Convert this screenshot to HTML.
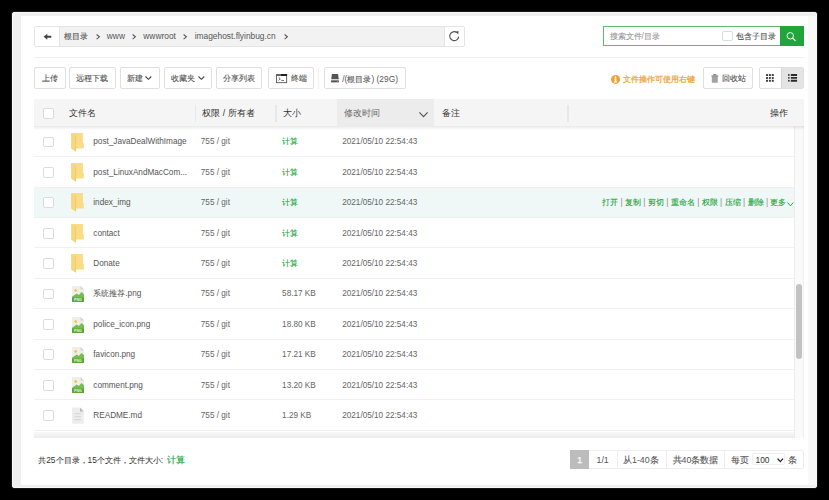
<!DOCTYPE html>
<html><head><meta charset="utf-8">
<style>
*{box-sizing:border-box;margin:0;padding:0}
html,body{width:829px;height:500px;overflow:hidden;background:#000}
body{position:relative;font-family:"Liberation Sans",sans-serif;font-size:8.2px;color:#555}
.abs{position:absolute}
#panel{left:12px;top:12px;width:805px;height:476px;background:#efefef;border-radius:3px;box-shadow:0 0 0 1px #161616, inset 0 0 0 1px #f9f9f9}
#white{left:21px;top:16px;width:796px;height:469px;background:#fff}
#rshade{left:808px;top:16px;width:9px;height:469px;background:#f9f9f9}
.box{position:absolute;border:1px solid #e2e2e2;border-radius:2px;background:#fff}
.t{position:absolute;white-space:nowrap}
.btn{position:absolute;top:67px;height:22px;border:1px solid #e0e0e0;border-radius:2px;background:#fff}
.row{position:absolute;left:34px;width:759.6px;height:30.42px;border-bottom:1px solid #f1f1f1}
.cb{position:absolute;width:10.8px;height:10.8px;border:1px solid #dcdcdc;border-radius:2px;background:#fff}
.g{color:#20a53a}
svg{position:absolute;overflow:visible}
</style></head><body>
<div id="panel" class="abs"></div>
<div id="white" class="abs"></div>
<div id="rshade" class="abs"></div>
<div class="box" style="left:34px;top:26px;width:431px;height:21px;background:#f2f2f2;border-color:#e4e4e4"></div>
<div class="abs" style="left:35px;top:27px;width:25px;height:19px;background:#fff;border-right:1px solid #e4e4e4"></div>
<div class="abs" style="left:444px;top:27px;width:20px;height:19px;background:#fff;border-left:1px solid #e4e4e4"></div>
<svg style="left:0;top:0" width="829" height="500"><path d="M43.6 36.7 L47.3 33.7 L47.3 35.8 L51.3 35.8 L51.3 37.7 L47.3 37.7 L47.3 39.7 Z" fill="#444"/><path d="M456.8 32.5 A4.5 4.5 0 1 0 458.7 36.6" fill="none" stroke="#555" stroke-width="1.15"/><path d="M455.4 31.7 L458.6 31.1 L458.2 34.6 Z" fill="#555"/></svg>
<div class="t" style="left:64.20px;top:31.60px;line-height:10px;font-size:8.0px;color:#555;"><span style="-webkit-text-stroke:0.12px currentColor">根目录</span></div>
<svg style="left:95.5px;top:33.6px" width="5" height="6"><path d="M0.6 0.5 L3.4 2.8 L0.6 5.1" fill="none" stroke="#555" stroke-width="1.05"/></svg>
<svg style="left:132.0px;top:33.6px" width="5" height="6"><path d="M0.6 0.5 L3.4 2.8 L0.6 5.1" fill="none" stroke="#555" stroke-width="1.05"/></svg>
<svg style="left:183.2px;top:33.6px" width="5" height="6"><path d="M0.6 0.5 L3.4 2.8 L0.6 5.1" fill="none" stroke="#555" stroke-width="1.05"/></svg>
<svg style="left:283.5px;top:33.6px" width="5" height="6"><path d="M0.6 0.5 L3.4 2.8 L0.6 5.1" fill="none" stroke="#555" stroke-width="1.05"/></svg>
<div class="t" style="left:106.80px;top:30.80px;line-height:10px;font-size:8.4px;color:#555;">www</div>
<div class="t" style="left:143.30px;top:30.80px;line-height:10px;font-size:8.4px;color:#555;">wwwroot</div>
<div class="t" style="left:194.70px;top:30.80px;line-height:10px;font-size:8.4px;color:#555;">imagehost.flyinbug.cn</div>
<div class="abs" style="left:34px;top:56.6px;width:770px;height:1px;background:#f0f0f0"></div>
<div class="abs" style="left:603.1px;top:26.2px;width:177px;height:20.3px;border:1px solid #5fbb6f;border-right:none;background:#fff"></div>
<div class="abs" style="left:779.7px;top:26.2px;width:24.1px;height:20.3px;background:#20a53a"></div>
<div class="t" style="left:609.50px;top:31.40px;line-height:10px;font-size:8.4px;color:#999;"><span style="-webkit-text-stroke:0.12px currentColor">搜索文件</span>/<span style="-webkit-text-stroke:0.12px currentColor">目录</span></div>
<div class="cb" style="left:722px;top:31px;width:10.6px;height:10.1px"></div>
<div class="t" style="left:735.90px;top:32.20px;line-height:10px;font-size:8.1px;color:#555;"><span style="-webkit-text-stroke:0.12px currentColor">包含子目录</span></div>
<svg style="left:0;top:0" width="829" height="500"><circle cx="790.3" cy="35.8" r="3.2" fill="none" stroke="#fff" stroke-width="0.95"/><path d="M792.6 38.1 L795.5 40.7" stroke="#fff" stroke-width="1.15"/></svg>
<div class="btn" style="left:34px;width:31.6px"></div>
<div class="btn" style="left:68.8px;width:47.1px"></div>
<div class="btn" style="left:119.6px;width:40.0px"></div>
<div class="btn" style="left:163.5px;width:48.2px"></div>
<div class="btn" style="left:215.5px;width:46.9px"></div>
<div class="btn" style="left:268.2px;width:45.7px"></div>
<div class="btn" style="left:324px;width:81.8px"></div>
<div class="btn" style="left:702.9px;width:50.2px"></div>
<div class="abs" style="left:318.3px;top:67.8px;width:1px;height:21px;background:#efefef"></div>
<div class="btn" style="left:759px;width:44.8px;overflow:hidden"><div class="abs" style="left:21.2px;top:0;width:23px;height:20px;background:#e4e4e4;border-left:1px solid #d6d6d6"></div></div>
<div class="t" style="left:42.10px;top:74.00px;line-height:10px;font-size:8.0px;color:#555;"><span style="-webkit-text-stroke:0.12px currentColor">上传</span></div>
<div class="t" style="left:76.40px;top:74.00px;line-height:10px;font-size:8.0px;color:#555;"><span style="-webkit-text-stroke:0.12px currentColor">远程下载</span></div>
<div class="t" style="left:127.10px;top:74.00px;line-height:10px;font-size:8.0px;color:#555;"><span style="-webkit-text-stroke:0.12px currentColor">新建</span></div>
<div class="t" style="left:171.10px;top:74.00px;line-height:10px;font-size:8.0px;color:#555;"><span style="-webkit-text-stroke:0.12px currentColor">收藏夹</span></div>
<div class="t" style="left:223.30px;top:74.00px;line-height:10px;font-size:8.0px;color:#555;"><span style="-webkit-text-stroke:0.12px currentColor">分享列表</span></div>
<div class="t" style="left:290.80px;top:74.00px;line-height:10px;font-size:8.0px;color:#555;"><span style="-webkit-text-stroke:0.12px currentColor">终端</span></div>
<div class="t" style="left:342.30px;top:73.50px;line-height:10px;font-size:8.4px;color:#555;">/(<span style="-webkit-text-stroke:0.12px currentColor">根目录</span>) (29G)</div>
<div class="t" style="left:721.90px;top:74.00px;line-height:10px;font-size:8.0px;color:#555;"><span style="-webkit-text-stroke:0.12px currentColor">回收站</span></div>
<div class="t" style="left:622.90px;top:74.60px;line-height:10px;font-size:8.0px;color:#eea540;"><span style="-webkit-text-stroke:0.25px currentColor">文件操作可使用右键</span></div>
<svg style="left:145.4px;top:76.1px" width="7" height="4"><path d="M0.5 0.5 L3.4 3.3 L6.3 0.5" fill="none" stroke="#444" stroke-width="1.1"/></svg>
<svg style="left:197.6px;top:76.1px" width="7" height="4"><path d="M0.5 0.5 L3.4 3.3 L6.3 0.5" fill="none" stroke="#444" stroke-width="1.1"/></svg>
<svg style="left:276px;top:74px" width="11" height="9"><rect x="0.45" y="0.45" width="10.2" height="8.2" fill="none" stroke="#555" stroke-width="0.9"/><rect x="0" y="0" width="5" height="2" fill="#666"/><rect x="5" y="0" width="6.1" height="2" fill="#222"/><path d="M2.7 3.3 L4.3 4.9 L2.7 6.5" fill="none" stroke="#444" stroke-width="0.9"/><rect x="5.4" y="6.0" width="2.6" height="0.8" fill="#555"/></svg>
<svg style="left:331px;top:73.5px" width="9" height="9"><path d="M1.3 0.1 H6.7 Q7.0 0.1 7.1 0.6 L7.8 5.3 H0.2 L0.9 0.6 Q1.0 0.1 1.3 0.1 Z" fill="#555"/><rect x="0.1" y="6.3" width="7.8" height="2.1" fill="#555"/><rect x="6.2" y="6.9" width="1" height="0.9" fill="#999"/></svg>
<svg style="left:611px;top:75.3px" width="10" height="10"><circle cx="4.55" cy="4.4" r="4.5" fill="#eea236"/><circle cx="4.5" cy="2.2" r="0.85" fill="#fff"/><path d="M3.3 3.5 H5.4 V6.4 H6.1 V7.4 H3.0 V6.4 H3.7 V4.4 H3.3 Z" fill="#fff"/></svg>
<svg style="left:710.6px;top:73.6px" width="8" height="10"><rect x="2.1" y="0.1" width="3.4" height="1.7" rx="0.85" fill="#8a8a8a"/><rect x="0.3" y="1.3" width="7.1" height="1.7" rx="0.8" fill="#999"/><path d="M0.8 3.0 H6.8 V8.0 Q6.8 8.8 6.0 8.8 H1.6 Q0.8 8.8 0.8 8.0 Z" fill="#a2a2a2"/></svg>
<svg style="left:766px;top:74.3px" width="8" height="8"><rect x="0.0" y="0.0" width="2" height="2" rx="0.6" fill="#3a3a3a"/><rect x="0.0" y="2.9" width="2" height="2" rx="0.6" fill="#3a3a3a"/><rect x="0.0" y="5.8" width="2" height="2" rx="0.6" fill="#3a3a3a"/><rect x="2.9" y="0.0" width="2" height="2" rx="0.6" fill="#3a3a3a"/><rect x="2.9" y="2.9" width="2" height="2" rx="0.6" fill="#3a3a3a"/><rect x="2.9" y="5.8" width="2" height="2" rx="0.6" fill="#3a3a3a"/><rect x="5.8" y="0.0" width="2" height="2" rx="0.6" fill="#3a3a3a"/><rect x="5.8" y="2.9" width="2" height="2" rx="0.6" fill="#3a3a3a"/><rect x="5.8" y="5.8" width="2" height="2" rx="0.6" fill="#3a3a3a"/></svg>
<svg style="left:788.2px;top:74.3px" width="10" height="8"><rect x="0.1" y="0.0" width="1.5" height="1.9" rx="0.7" fill="#222"/><rect x="2.8" y="0.0" width="6.3" height="1.9" rx="0.3" fill="#2a2a2a"/><rect x="0.1" y="2.9" width="1.5" height="1.9" rx="0.7" fill="#222"/><rect x="2.8" y="2.9" width="6.3" height="1.9" rx="0.3" fill="#2a2a2a"/><rect x="0.1" y="5.8" width="1.5" height="1.9" rx="0.7" fill="#222"/><rect x="2.8" y="5.8" width="6.3" height="1.9" rx="0.3" fill="#2a2a2a"/></svg>
<div class="abs" style="left:34px;top:99.2px;width:770px;height:26.6px;background:#f5f5f5"></div>
<div class="abs" style="left:337.2px;top:99.2px;width:97.3px;height:26.6px;background:#ececec"></div>
<div class="cb" style="left:43.3px;top:108.1px;width:10.5px;height:10.5px"></div>
<div class="t" style="left:69.20px;top:107.90px;line-height:10px;font-size:8.8px;color:#333;">文件名</div>
<div class="t" style="left:202.40px;top:107.90px;line-height:10px;font-size:8.8px;color:#333;">权限 / 所有者</div>
<div class="t" style="left:283.00px;top:107.90px;line-height:10px;font-size:8.8px;color:#333;">大小</div>
<div class="t" style="left:343.80px;top:107.90px;line-height:10px;font-size:8.8px;color:#666;">修改时间</div>
<div class="t" style="left:441.50px;top:107.90px;line-height:10px;font-size:8.8px;color:#333;">备注</div>
<div class="t" style="left:769.50px;top:107.90px;line-height:10px;font-size:8.8px;color:#333;">操作</div>
<div class="abs" style="left:194.5px;top:105.2px;width:1.5px;height:17px;background:#e8e8e8"></div>
<div class="abs" style="left:275.2px;top:105.2px;width:1.5px;height:17px;background:#e8e8e8"></div>
<div class="abs" style="left:567.2px;top:105.2px;width:1.5px;height:17px;background:#e8e8e8"></div>
<svg style="left:418.8px;top:111.5px" width="9" height="5"><path d="M0.4 0.4 L4.5 4.6 L8.6 0.4" fill="none" stroke="#555" stroke-width="1.15"/></svg>
<div class="row" style="top:126.70px"></div>
<div class="cb" style="left:43.2px;top:136.51px"></div>
<svg style="left:0;top:-0.39px" width="829" height="200"><path d="M71.2 132.9 H82.9 V142.9 H83.8 V148.5 H75.6 V151.5 L71.2 148.5 Z" fill="#f9dc85"/><path d="M71.2 132.9 L75.6 135.6 V151.5 L71.2 148.5 Z" fill="#f7d77e"/><path d="M75.6 135.6 V151.5" stroke="#e9c463" stroke-width="0.6"/></svg>
<div class="t" style="left:93.30px;top:137.31px;line-height:10px;color:#555;">post_JavaDealWithImage</div>
<div class="t" style="left:200.80px;top:137.31px;line-height:10px;color:#666;">755 / git</div>
<div class="t" style="left:282.10px;top:137.31px;line-height:10px;color:#20a53a;"><span style="-webkit-text-stroke:0.12px currentColor">计算</span></div>
<div class="t" style="left:342.20px;top:137.31px;line-height:10px;color:#666;">2021/05/10 22:54:43</div>
<div class="row" style="top:157.12px"></div>
<div class="cb" style="left:43.2px;top:166.93px"></div>
<svg style="left:0;top:30.03px" width="829" height="200"><path d="M71.2 132.9 H82.9 V142.9 H83.8 V148.5 H75.6 V151.5 L71.2 148.5 Z" fill="#f9dc85"/><path d="M71.2 132.9 L75.6 135.6 V151.5 L71.2 148.5 Z" fill="#f7d77e"/><path d="M75.6 135.6 V151.5" stroke="#e9c463" stroke-width="0.6"/></svg>
<div class="t" style="left:93.30px;top:167.73px;line-height:10px;color:#555;">post_LinuxAndMacCom...</div>
<div class="t" style="left:200.80px;top:167.73px;line-height:10px;color:#666;">755 / git</div>
<div class="t" style="left:282.10px;top:167.73px;line-height:10px;color:#20a53a;"><span style="-webkit-text-stroke:0.12px currentColor">计算</span></div>
<div class="t" style="left:342.20px;top:167.73px;line-height:10px;color:#666;">2021/05/10 22:54:43</div>
<div class="row" style="top:187.54px;background:#eff8f6"></div>
<div class="cb" style="left:43.2px;top:197.35px"></div>
<svg style="left:0;top:60.45px" width="829" height="200"><path d="M71.2 132.9 H82.9 V142.9 H83.8 V148.5 H75.6 V151.5 L71.2 148.5 Z" fill="#f9dc85"/><path d="M71.2 132.9 L75.6 135.6 V151.5 L71.2 148.5 Z" fill="#f7d77e"/><path d="M75.6 135.6 V151.5" stroke="#e9c463" stroke-width="0.6"/></svg>
<div class="t" style="left:93.30px;top:198.15px;line-height:10px;color:#555;">index_img</div>
<div class="t" style="left:200.80px;top:198.15px;line-height:10px;color:#666;">755 / git</div>
<div class="t" style="left:282.10px;top:198.15px;line-height:10px;color:#20a53a;"><span style="-webkit-text-stroke:0.12px currentColor">计算</span></div>
<div class="t" style="left:342.20px;top:198.15px;line-height:10px;color:#666;">2021/05/10 22:54:43</div>
<div class="t" style="left:602.00px;top:198.15px;line-height:10px;color:#20a53a;word-spacing:0.11px;"><span style="-webkit-text-stroke:0.12px currentColor">打开</span> <span style="color:#888">|</span> <span style="-webkit-text-stroke:0.12px currentColor">复制</span> <span style="color:#888">|</span> <span style="-webkit-text-stroke:0.12px currentColor">剪切</span> <span style="color:#888">|</span> <span style="-webkit-text-stroke:0.12px currentColor">重命名</span> <span style="color:#888">|</span> <span style="-webkit-text-stroke:0.12px currentColor">权限</span> <span style="color:#888">|</span> <span style="-webkit-text-stroke:0.12px currentColor">压缩</span> <span style="color:#888">|</span> <span style="-webkit-text-stroke:0.12px currentColor">删除</span> <span style="color:#888">|</span> <span style="-webkit-text-stroke:0.12px currentColor">更多</span></div>
<svg style="left:786.7px;top:201.6px" width="8" height="5"><path d="M0.5 0.5 L3.4 3.9 L6.3 0.5" fill="none" stroke="#20a53a" stroke-width="0.95"/></svg>
<div class="row" style="top:217.96px"></div>
<div class="cb" style="left:43.2px;top:227.77px"></div>
<svg style="left:0;top:90.87px" width="829" height="200"><path d="M71.2 132.9 H82.9 V142.9 H83.8 V148.5 H75.6 V151.5 L71.2 148.5 Z" fill="#f9dc85"/><path d="M71.2 132.9 L75.6 135.6 V151.5 L71.2 148.5 Z" fill="#f7d77e"/><path d="M75.6 135.6 V151.5" stroke="#e9c463" stroke-width="0.6"/></svg>
<div class="t" style="left:93.30px;top:228.57px;line-height:10px;color:#555;">contact</div>
<div class="t" style="left:200.80px;top:228.57px;line-height:10px;color:#666;">755 / git</div>
<div class="t" style="left:282.10px;top:228.57px;line-height:10px;color:#20a53a;"><span style="-webkit-text-stroke:0.12px currentColor">计算</span></div>
<div class="t" style="left:342.20px;top:228.57px;line-height:10px;color:#666;">2021/05/10 22:54:43</div>
<div class="row" style="top:248.38px"></div>
<div class="cb" style="left:43.2px;top:258.19px"></div>
<svg style="left:0;top:121.29px" width="829" height="200"><path d="M71.2 132.9 H82.9 V142.9 H83.8 V148.5 H75.6 V151.5 L71.2 148.5 Z" fill="#f9dc85"/><path d="M71.2 132.9 L75.6 135.6 V151.5 L71.2 148.5 Z" fill="#f7d77e"/><path d="M75.6 135.6 V151.5" stroke="#e9c463" stroke-width="0.6"/></svg>
<div class="t" style="left:93.30px;top:258.99px;line-height:10px;color:#555;">Donate</div>
<div class="t" style="left:200.80px;top:258.99px;line-height:10px;color:#666;">755 / git</div>
<div class="t" style="left:282.10px;top:258.99px;line-height:10px;color:#20a53a;"><span style="-webkit-text-stroke:0.12px currentColor">计算</span></div>
<div class="t" style="left:342.20px;top:258.99px;line-height:10px;color:#666;">2021/05/10 22:54:43</div>
<div class="row" style="top:278.80px"></div>
<div class="cb" style="left:43.2px;top:288.61px"></div>
<svg style="left:0;top:0.11px" width="829" height="320"><path d="M72 286.1 H80.6 L84 289.6 V301.9 H72 Z" fill="#eeeeea"/><path d="M80.6 286.1 V289.6 H84 Z" fill="#d4d4d0"/><circle cx="75.65" cy="290.4" r="1.25" fill="#f5c31c"/><path d="M72 296.8 L76.8 293.4 L78.8 295 L81.5 292.1 L84 294.2 V301.9 H72 Z" fill="#74bd50"/><rect x="72" y="297.6" width="12" height="4.3" fill="#58a536"/><text x="78" y="301.2" font-size="3.6" font-family="Liberation Sans" font-weight="bold" fill="#e8f3e0" text-anchor="middle">PNG</text></svg>
<div class="t" style="left:93.30px;top:289.41px;line-height:10px;color:#555;"><span style="-webkit-text-stroke:0.05px currentColor">系统推荐</span>.png</div>
<div class="t" style="left:200.80px;top:289.41px;line-height:10px;color:#666;">755 / git</div>
<div class="t" style="left:282.10px;top:289.41px;line-height:10px;color:#666;">58.17 KB</div>
<div class="t" style="left:342.20px;top:289.41px;line-height:10px;color:#666;">2021/05/10 22:54:43</div>
<div class="row" style="top:309.22px"></div>
<div class="cb" style="left:43.2px;top:319.03px"></div>
<svg style="left:0;top:30.53px" width="829" height="320"><path d="M72 286.1 H80.6 L84 289.6 V301.9 H72 Z" fill="#eeeeea"/><path d="M80.6 286.1 V289.6 H84 Z" fill="#d4d4d0"/><circle cx="75.65" cy="290.4" r="1.25" fill="#f5c31c"/><path d="M72 296.8 L76.8 293.4 L78.8 295 L81.5 292.1 L84 294.2 V301.9 H72 Z" fill="#74bd50"/><rect x="72" y="297.6" width="12" height="4.3" fill="#58a536"/><text x="78" y="301.2" font-size="3.6" font-family="Liberation Sans" font-weight="bold" fill="#e8f3e0" text-anchor="middle">PNG</text></svg>
<div class="t" style="left:93.30px;top:319.83px;line-height:10px;color:#555;">police_icon.png</div>
<div class="t" style="left:200.80px;top:319.83px;line-height:10px;color:#666;">755 / git</div>
<div class="t" style="left:282.10px;top:319.83px;line-height:10px;color:#666;">18.80 KB</div>
<div class="t" style="left:342.20px;top:319.83px;line-height:10px;color:#666;">2021/05/10 22:54:43</div>
<div class="row" style="top:339.64px"></div>
<div class="cb" style="left:43.2px;top:349.45px"></div>
<svg style="left:0;top:60.95px" width="829" height="320"><path d="M72 286.1 H80.6 L84 289.6 V301.9 H72 Z" fill="#eeeeea"/><path d="M80.6 286.1 V289.6 H84 Z" fill="#d4d4d0"/><circle cx="75.65" cy="290.4" r="1.25" fill="#f5c31c"/><path d="M72 296.8 L76.8 293.4 L78.8 295 L81.5 292.1 L84 294.2 V301.9 H72 Z" fill="#74bd50"/><rect x="72" y="297.6" width="12" height="4.3" fill="#58a536"/><text x="78" y="301.2" font-size="3.6" font-family="Liberation Sans" font-weight="bold" fill="#e8f3e0" text-anchor="middle">PNG</text></svg>
<div class="t" style="left:93.30px;top:350.25px;line-height:10px;color:#555;">favicon.png</div>
<div class="t" style="left:200.80px;top:350.25px;line-height:10px;color:#666;">755 / git</div>
<div class="t" style="left:282.10px;top:350.25px;line-height:10px;color:#666;">17.21 KB</div>
<div class="t" style="left:342.20px;top:350.25px;line-height:10px;color:#666;">2021/05/10 22:54:43</div>
<div class="row" style="top:370.06px"></div>
<div class="cb" style="left:43.2px;top:379.87px"></div>
<svg style="left:0;top:91.37px" width="829" height="320"><path d="M72 286.1 H80.6 L84 289.6 V301.9 H72 Z" fill="#eeeeea"/><path d="M80.6 286.1 V289.6 H84 Z" fill="#d4d4d0"/><circle cx="75.65" cy="290.4" r="1.25" fill="#f5c31c"/><path d="M72 296.8 L76.8 293.4 L78.8 295 L81.5 292.1 L84 294.2 V301.9 H72 Z" fill="#74bd50"/><rect x="72" y="297.6" width="12" height="4.3" fill="#58a536"/><text x="78" y="301.2" font-size="3.6" font-family="Liberation Sans" font-weight="bold" fill="#e8f3e0" text-anchor="middle">PNG</text></svg>
<div class="t" style="left:93.30px;top:380.67px;line-height:10px;color:#555;">comment.png</div>
<div class="t" style="left:200.80px;top:380.67px;line-height:10px;color:#666;">755 / git</div>
<div class="t" style="left:282.10px;top:380.67px;line-height:10px;color:#666;">13.20 KB</div>
<div class="t" style="left:342.20px;top:380.67px;line-height:10px;color:#666;">2021/05/10 22:54:43</div>
<div class="row" style="top:400.48px"></div>
<div class="cb" style="left:43.2px;top:410.29px"></div>
<svg style="left:0;top:0.09px" width="829" height="440"><path d="M72 407.5 H80 L83.75 411.5 V423.75 H72 Z" fill="#ededed"/><path d="M80 407.5 L83.75 411.5 H80 Z" fill="#b9b9b9"/><rect x="74.3" y="413.3" width="6.7" height="0.9" fill="#d2d2d2"/><rect x="74.3" y="416.3" width="6.7" height="0.9" fill="#d2d2d2"/><rect x="74.3" y="419.3" width="6.7" height="0.9" fill="#d2d2d2"/></svg>
<div class="t" style="left:93.30px;top:411.09px;line-height:10px;color:#555;">README.md</div>
<div class="t" style="left:200.80px;top:411.09px;line-height:10px;color:#666;">755 / git</div>
<div class="t" style="left:282.10px;top:411.09px;line-height:10px;color:#666;">1.29 KB</div>
<div class="t" style="left:342.20px;top:411.09px;line-height:10px;color:#666;">2021/05/10 22:54:43</div>
<div class="abs" style="left:793.6px;top:126px;width:10.4px;height:311.8px;background:#fafafa;border-left:1px solid #ececec;border-right:1px solid #f1f1f1"></div>
<div class="abs" style="left:796.4px;top:283.8px;width:5.6px;height:75px;background:#c2c2c2;border-radius:3px"></div>
<div class="abs" style="left:34px;top:432px;width:759.6px;height:6px;background:linear-gradient(#f9f9f9,#ececec)"></div>
<div class="abs" style="left:34px;top:125.8px;width:770px;height:4.2px;background:linear-gradient(rgba(0,0,0,0.09),rgba(0,0,0,0))"></div>
<div class="t" style="left:38.20px;top:455.00px;line-height:10px;font-size:8.4px;color:#333;"><span style="-webkit-text-stroke:0.05px currentColor">共</span>25<span style="-webkit-text-stroke:0.05px currentColor">个目录，</span>15<span style="-webkit-text-stroke:0.05px currentColor">个文件，文件大小</span>: </div>
<div class="t" style="left:166.80px;top:454.60px;line-height:10px;font-size:8.8px;color:#20a53a;"><span style="-webkit-text-stroke:0.15px currentColor">计算</span></div>
<div class="box" style="left:570px;top:450px;width:233.6px;height:18.6px;border-color:#eee"></div>
<div class="abs" style="left:570px;top:450px;width:19px;height:18.6px;background:#bcbcbc"></div>
<div class="t" style="left:577.20px;top:455.30px;line-height:10px;font-size:8.8px;color:#fff;-webkit-text-stroke:0.25px #fff;">1</div>
<div class="abs" style="left:616.6px;top:451px;width:1px;height:16.6px;background:#eee"></div>
<div class="abs" style="left:665.6px;top:451px;width:1px;height:16.6px;background:#eee"></div>
<div class="abs" style="left:724.4px;top:451px;width:1px;height:16.6px;background:#eee"></div>
<div class="t" style="left:596.50px;top:455.30px;line-height:10px;font-size:8.8px;color:#555;">1/1</div>
<div class="t" style="left:623.00px;top:455.30px;line-height:10px;font-size:8.8px;color:#555;"><span style="-webkit-text-stroke:0.12px currentColor">从</span>1-40<span style="-webkit-text-stroke:0.12px currentColor">条</span></div>
<div class="t" style="left:672.50px;top:455.30px;line-height:10px;font-size:8.8px;color:#555;"><span style="-webkit-text-stroke:0.12px currentColor">共</span>40<span style="-webkit-text-stroke:0.12px currentColor">条数据</span></div>
<div class="t" style="left:731.00px;top:455.30px;line-height:10px;font-size:8.8px;color:#555;"><span style="-webkit-text-stroke:0.12px currentColor">每页</span></div>
<div class="box" style="left:752px;top:453.4px;width:33.2px;height:12px;border-color:#efefef"></div>
<div class="t" style="left:755.50px;top:455.30px;line-height:10px;font-size:8.4px;color:#333;">100</div>
<svg style="left:776.6px;top:457.6px" width="7" height="5"><path d="M0.6 0.6 L3.3 3.6 L6.0 0.6" fill="none" stroke="#222" stroke-width="1.3"/></svg>
<div class="t" style="left:787.80px;top:455.30px;line-height:10px;font-size:8.8px;color:#555;"><span style="-webkit-text-stroke:0.12px currentColor">条</span></div>
</body></html>
